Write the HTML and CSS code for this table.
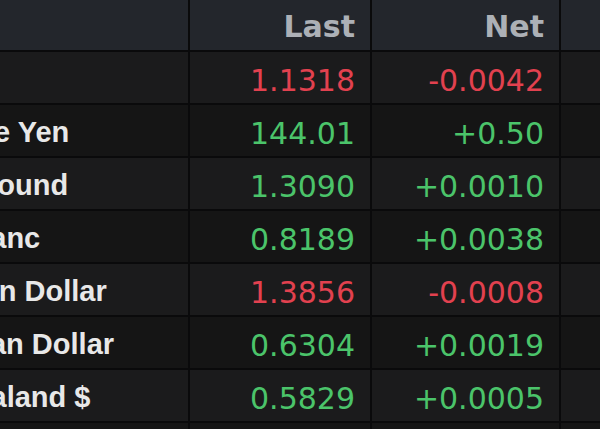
FILE: index.html
```html
<!DOCTYPE html>
<html>
<head>
<meta charset="utf-8">
<link rel="stylesheet" href="styles.css">
</head>
<body>
<div class="grid">
  <div class="cell head"></div>
  <div class="cell head num">Last</div>
  <div class="cell head num">Net</div>
  <div class="cell head"></div>

  <div class="cell name r1"><span class="eur">Euro</span></div>
  <div class="cell num r1 dn">1.1318</div>
  <div class="cell num r1 dn">-0.0042</div>
  <div class="cell r1"></div>

  <div class="cell name r2"><span class="jpy">Japanese Yen</span></div>
  <div class="cell num r2 up">144.01</div>
  <div class="cell num r2 up">+0.50</div>
  <div class="cell r2"></div>

  <div class="cell name r1"><span class="gbp">British Pound</span></div>
  <div class="cell num r1 up">1.3090</div>
  <div class="cell num r1 up">+0.0010</div>
  <div class="cell r1"></div>

  <div class="cell name r2"><span class="chf">Swiss Franc</span></div>
  <div class="cell num r2 up">0.8189</div>
  <div class="cell num r2 up">+0.0038</div>
  <div class="cell r2"></div>

  <div class="cell name r1"><span class="cad">Canadian Dollar</span></div>
  <div class="cell num r1 dn">1.3856</div>
  <div class="cell num r1 dn">-0.0008</div>
  <div class="cell r1"></div>

  <div class="cell name r2"><span class="aud">Australian Dollar</span></div>
  <div class="cell num r2 up">0.6304</div>
  <div class="cell num r2 up">+0.0019</div>
  <div class="cell r2"></div>

  <div class="cell name r1"><span class="nzd">New Zealand $</span></div>
  <div class="cell num r1 up">0.5829</div>
  <div class="cell num r1 up">+0.0005</div>
  <div class="cell r1"></div>

  <div class="cell name r2"></div>
  <div class="cell num r2"></div>
  <div class="cell num r2"></div>
  <div class="cell r2"></div>
</div>
</body>
</html>
```
FILE: styles.css
```css
html, body {
  margin: 0;
  padding: 0;
  background: #0a0a0b;
  overflow: hidden;
}
.grid {
  display: grid;
  grid-template-columns: 188px 180px 187px 1fr;
  grid-template-rows: 50px repeat(8, 51px);
  gap: 2px;
  width: 600px;
  height: 429px;
  background: #0a0a0b;
  overflow: hidden;
  font-family: "DejaVu Sans", sans-serif;
}
.cell {
  display: flex;
  align-items: center;
  overflow: hidden;
  white-space: nowrap;
}
.head {
  background: #23262c;
  color: #acb0b6;
  font-weight: bold;
  font-size: 25px;
  padding-top: 2px;
}
.r1 { background: #1b1b1c; }
.r2 { background: #151515; }
.num {
  justify-content: flex-end;
  padding-right: 15px;
  font-size: 30px;
}
.r1.num, .r2.num { padding-top: 5px; }
.name {
  color: #e8e8e8;
  font-family: "Liberation Sans", Arial, sans-serif;
  font-weight: bold;
  font-size: 29px;
  padding-top: 3px;
}
.name span { flex-shrink: 0; }
.eur { margin-left: -120px; }
.jpy { margin-left: -122px; }
.gbp { margin-left: -122px; }
.chf { margin-left: -129px; }
.cad { margin-left: -114px; }
.aud { margin-left: -118px; }
.nzd { margin-left: -111px; }
.up { color: #4bc46a; }
.dn { color: #e2414f; }
```
